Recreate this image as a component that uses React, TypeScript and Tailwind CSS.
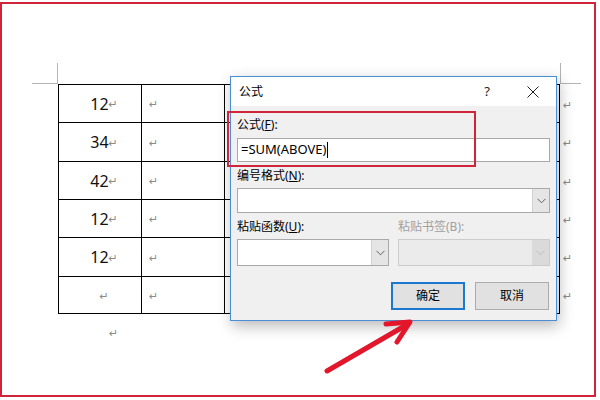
import React from "react";

const Mark = ({ className = "" }: { className?: string }) => (
  <span
    className={`inline-block text-[11px] leading-none text-[#8a8a8a] ${className}`}
    style={{ fontFamily: "'DejaVu Sans', sans-serif" }}
  >
    ↵
  </span>
);

const rows: { h: string; v: string }[] = [
  { h: "h-[38px]", v: "12" },
  { h: "h-[39px]", v: "34" },
  { h: "h-[38px]", v: "42" },
  { h: "h-[38px]", v: "12" },
  { h: "h-[39px]", v: "12" },
  { h: "h-[37px]", v: "" },
];

const Chevron = ({ color = "#606060" }: { color?: string }) => (
  <svg width="9" height="6" viewBox="0 0 9 6">
    <polyline points="0.5,0.8 4.5,4.8 8.5,0.8" fill="none" stroke={color} strokeWidth="1" />
  </svg>
);

export default function App() {
  return (
    <div
      className="relative w-[600px] h-[400px] bg-white overflow-hidden"
      style={{ fontFamily: "'Noto Sans', 'Noto Sans CJK SC', sans-serif" }}
    >
      {/* page frame */}
      <div className="mt-[2px] w-[596px] h-[395px] border-2 border-[#d0243a]">
        <div className="ml-[56px] mt-[80px] flex">
          <div className="border-l border-t border-black">
            {rows.map((r, i) => (
              <div key={i} className={`flex ${r.h}`}>
                <div className="w-[83px] border-r border-b border-black flex items-center justify-center text-[16px] text-[#111]">
                  {r.v}
                  <Mark className="mr-[-8px] mt-[2px]" />
                </div>
                <div className="w-[83px] border-r border-b border-black flex items-center pl-[7px]">
                  <Mark className="mt-[2px]" />
                </div>
                <div className="w-[335px] border-r border-b border-black" />
              </div>
            ))}
          </div>
          <div className="pt-[1px] pl-[3px]">
            {rows.map((r, i) => (
              <div key={i} className={`${r.h} flex items-center`}>
                <Mark className="mt-[2px]" />
              </div>
            ))}
          </div>
        </div>
        <div className="ml-[107px] mt-[12px] h-[14px] flex items-center">
          <Mark />
        </div>
      </div>

      {/* margin corner marks */}
      <div className="absolute left-[57px] top-[63px] w-px h-[21px] bg-[#b4b4b4]" />
      <div className="absolute left-[32px] top-[83px] w-[26px] h-px bg-[#b4b4b4]" />
      <div className="absolute left-[560px] top-[63px] w-px h-[21px] bg-[#b4b4b4]" />
      <div className="absolute left-[560px] top-[83px] w-[21px] h-px bg-[#b4b4b4]" />

      {/* dialog */}
      <div
        className="absolute left-[230px] top-[76px] w-[327px] h-[245px] border border-[#4a8fd6] bg-[#f0f0f0] shadow-[2px_5px_14px_rgba(0,0,0,0.28)] text-[12px] text-black"
        style={{ fontFamily: "'Noto Sans', 'Noto Sans CJK SC', sans-serif" }}
      >
        <div className="h-[29px] bg-white flex items-center">
          <span className="flex-1 pl-[8px] leading-none">公式</span>
          <span className="w-[46px] h-full flex items-center justify-center text-[13px] text-[#222]">?</span>
          <span className="w-[46px] h-full flex items-center justify-center">
            <svg width="12" height="12" viewBox="0 0 12 12">
              <path d="M0.5 0.5 L11.5 11.5 M11.5 0.5 L0.5 11.5" stroke="#222" strokeWidth="1" />
            </svg>
          </span>
        </div>
        <div className="px-[6px] pt-[11px] flex flex-col">
          <div className="h-[16px] leading-[16px]">
            公式(<span className="underline">F</span>):
          </div>
          <div className="mt-[5px] h-[24px] bg-white border border-[#a9a9a9] flex items-center pl-[3px] text-[13px]">
            =SUM(ABOVE)
            <span className="inline-block w-px h-[16px] bg-black ml-[1px]" />
          </div>
          <div className="mt-[6px] h-[16px] leading-[16px]">
            编号格式(<span className="underline">N</span>):
          </div>
          <div className="mt-[4px] h-[25px] bg-white border border-[#a9a9a9] flex justify-end">
            <div className="w-[17px] h-full bg-[#e5e5e5] border-l border-[#cfcfcf] flex items-center justify-center">
              <Chevron />
            </div>
          </div>
          <div className="mt-[6px] flex gap-[9px]">
            <div className="w-[152px]">
              <div className="h-[16px] leading-[16px]">
                粘贴函数(<span className="underline">U</span>):
              </div>
              <div className="mt-[4px] h-[27px] bg-white border border-[#a9a9a9] flex justify-end">
                <div className="w-[17px] h-full bg-[#e5e5e5] border-l border-[#cfcfcf] flex items-center justify-center">
                  <Chevron />
                </div>
              </div>
            </div>
            <div className="w-[152px]">
              <div className="h-[16px] leading-[16px] text-[#a0a0a0]">粘贴书签(B):</div>
              <div className="mt-[4px] h-[27px] bg-[#ebebeb] border border-[#cccccc] flex justify-end">
                <div className="w-[17px] h-full bg-[#dadada] flex items-center justify-center">
                  <Chevron color="#bdbdbd" />
                </div>
              </div>
            </div>
          </div>
          <div className="mt-[16px] flex justify-end gap-[10px] mr-[1px]">
            <div className="w-[74px] h-[28px] bg-[#e1e1e1] border-2 border-[#1a7ad0] flex items-center justify-center">
              确定
            </div>
            <div className="w-[74px] h-[28px] bg-[#e1e1e1] border border-[#adadad] flex items-center justify-center">
              取消
            </div>
          </div>
        </div>
      </div>

      {/* red highlight box */}
      <div className="absolute left-[227px] top-[111px] w-[249px] h-[56px] border-2 border-[#d0243a]" />

      {/* red arrow */}
      <svg className="absolute left-0 top-0" width="600" height="400" viewBox="0 0 600 400">
        <g stroke="#e3172b" strokeWidth="5" strokeLinecap="round" strokeLinejoin="round" fill="none">
          <path d="M327 371 L408 324" />
          <path d="M386 324 L410 322 L397 342" />
        </g>
      </svg>
    </div>
  );
}
